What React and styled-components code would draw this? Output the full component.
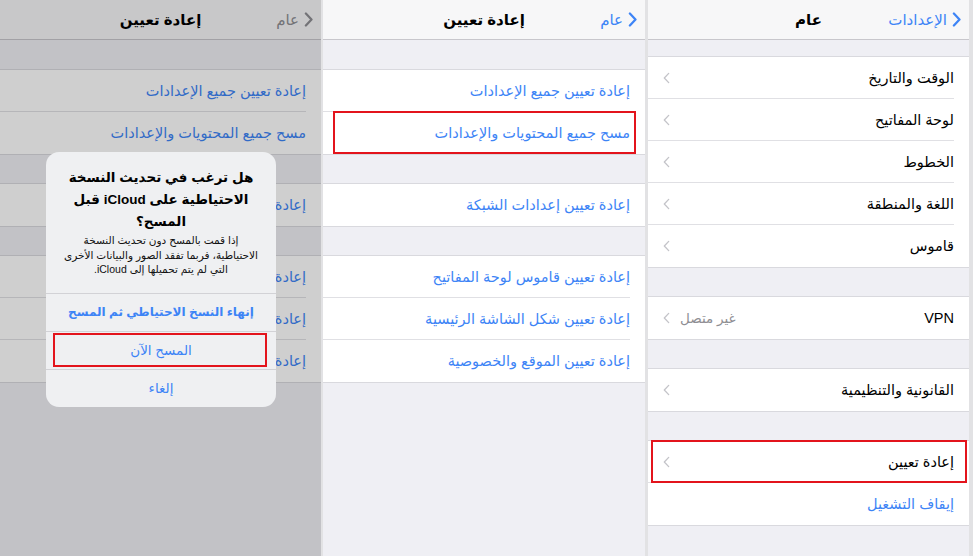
import React from 'react'
import styled, { createGlobalStyle, css } from 'styled-components'

const BLUE = '#3d84f6'
const GRAY = '#8e8e93'

const GlobalStyle = createGlobalStyle`
  html, body { margin: 0; padding: 0; background: #e2e2e4; }
  body { font-family: "Liberation Sans", "DejaVu Sans", sans-serif; }
`

const Screen = styled.div`
  display: flex;
  width: 973px;
  height: 556px;
  background: #e2e2e4;
  overflow: hidden;
`

const Phone = styled.div`
  position: relative;
  flex: 0 0 ${p => p.$w}px;
  margin-right: ${p => p.$gap || 0}px;
  height: 100%;
  background: #efeff4;
  direction: rtl;
  overflow: hidden;
`

const NavBar = styled.div`
  height: 40px;
  box-sizing: border-box;
  display: grid;
  grid-template-columns: 1fr auto 1fr;
  align-items: center;
  padding: 0 8px;
  background: #f7f7f8;
  border-bottom: 1px solid #c8c7cc;
`

const Back = styled.div`
  display: flex;
  align-items: center;
  gap: 5px;
  font-size: 15px;
  color: ${p => p.$color};
`

const Title = styled.div`
  font-size: 15px;
  font-weight: bold;
  color: #000;
`

const Group = styled.div`
  margin-top: ${p => p.$top}px;
  background: #fff;
  border-top: 1px solid #d9d9de;
  border-bottom: 1px solid #d9d9de;
`

const marked = css`
  &::after {
    content: '';
    position: absolute;
    top: ${p => p.$mark.t}px;
    bottom: ${p => p.$mark.b}px;
    left: ${p => p.$mark.l}px;
    right: ${p => p.$mark.r}px;
    border: 2px solid #e3141c;
    pointer-events: none;
  }
`

const Row = styled.div`
  position: relative;
  height: 42px;
  padding-right: 15px;
  display: flex;
  ${p => p.$mark && marked}
`

const RowBody = styled.div`
  flex: 1;
  display: flex;
  align-items: center;
  justify-content: space-between;
  padding-left: 15px;
  box-sizing: border-box;
  border-bottom: ${p => (p.$last ? 'none' : '1px solid #e0e0e4')};
`

const Label = styled.span`
  font-size: 14.5px;
  color: ${p => (p.$blue ? BLUE : '#000')};
`

const Accessory = styled.div`
  display: flex;
  align-items: center;
  gap: 10px;
  font-size: 13.5px;
  color: ${GRAY};
`

const Dim = styled.div`
  position: absolute;
  inset: 0;
  background: rgba(0, 0, 0, 0.19);
`

const Alert = styled.div`
  position: absolute;
  top: 152px;
  left: 46px;
  width: 230px;
  background: #eff0f2;
  border-radius: 13px;
  text-align: center;
`

const AlertText = styled.div`
  padding: 15px 8px 16px;
`

const AlertTitle = styled.div`
  font-size: 13.5px;
  font-weight: bold;
  line-height: 22px;
  color: #000;
`

const AlertMessage = styled.div`
  font-size: 10.5px;
  line-height: 14.5px;
  color: #111;
  white-space: nowrap;
`

const AlertButton = styled.div`
  position: relative;
  height: 37px;
  display: flex;
  align-items: center;
  justify-content: center;
  border-top: 1px solid #d2d2d6;
  font-size: ${p => (p.$bold ? 12 : 13.5)}px;
  font-weight: ${p => (p.$bold ? 'bold' : 'normal')};
  color: ${BLUE};
  ${p => p.$mark && marked}
`

const BackChevron = ({ color }) => (
  <svg width="9" height="15" viewBox="0 0 12 20">
    <path d="M2.5 2 L10 10 L2.5 18" fill="none" stroke={color} strokeWidth="3" strokeLinecap="round" strokeLinejoin="round" />
  </svg>
)

const Disclosure = () => (
  <svg width="7" height="12" viewBox="0 0 8 13">
    <path d="M6.5 1.2 L1.5 6.5 L6.5 11.8" fill="none" stroke="#c4c4c9" strokeWidth="1.5" strokeLinecap="round" strokeLinejoin="round" />
  </svg>
)

function Nav({ back, title, tint }) {
  return (
    <NavBar>
      <Back $color={tint}>
        <BackChevron color={tint} />
        <span>{back}</span>
      </Back>
      <Title>{title}</Title>
      <span />
    </NavBar>
  )
}

function Cells({ items, top, chevrons }) {
  return (
    <Group $top={top}>
      {items.map((it, i) => (
        <Row key={i} $mark={it.mark}>
          <RowBody $last={i === items.length - 1}>
            <Label $blue={it.blue}>{it.label}</Label>
            {chevrons && !it.blue && (
              <Accessory>
                {it.detail && <span>{it.detail}</span>}
                <Disclosure />
              </Accessory>
            )}
          </RowBody>
        </Row>
      ))}
    </Group>
  )
}

const resetGroups = (mark) => [
  [
    { label: 'إعادة تعيين جميع الإعدادات', blue: true },
    { label: 'مسح جميع المحتويات والإعدادات', blue: true, mark },
  ],
  [{ label: 'إعادة تعيين إعدادات الشبكة', blue: true }],
  [
    { label: 'إعادة تعيين قاموس لوحة المفاتيح', blue: true },
    { label: 'إعادة تعيين شكل الشاشة الرئيسية', blue: true },
    { label: 'إعادة تعيين الموقع والخصوصية', blue: true },
  ],
]

function ResetScreen({ tint, mark }) {
  return (
    <>
      <Nav back="عام" title="إعادة تعيين" tint={tint} />
      {resetGroups(mark).map((g, i) => (
        <Cells key={i} items={g} top={i === 0 ? 29 : 28} />
      ))}
    </>
  )
}

const generalGroups = [
  [
    { label: 'الوقت والتاريخ' },
    { label: 'لوحة المفاتيح' },
    { label: 'الخطوط' },
    { label: 'اللغة والمنطقة' },
    { label: 'قاموس' },
  ],
  [{ label: 'VPN', detail: 'غير متصل' }],
  [{ label: 'القانونية والتنظيمية' }],
  [
    { label: 'إعادة تعيين', mark: { t: -1, b: 0, l: 3, r: 2 } },
    { label: 'إيقاف التشغيل', blue: true },
  ],
]

export default function App() {
  return (
    <Screen>
      <GlobalStyle />
      <Phone $w={321} $gap={2}>
        <ResetScreen tint={GRAY} />
        <Dim />
        <Alert>
          <AlertText>
            <AlertTitle>
              هل ترغب في تحديث النسخة
              <br />
              الاحتياطية على iCloud قبل
              <br />
              المسح؟
            </AlertTitle>
            <AlertMessage>
              إذا قمت بالمسح دون تحديث النسخة
              <br />
              الاحتياطية، فربما تفقد الصور والبيانات الأخرى
              <br />
              التي لم يتم تحميلها إلى iCloud.
            </AlertMessage>
          </AlertText>
          <AlertButton $bold>إنهاء النسخ الاحتياطي ثم المسح</AlertButton>
          <AlertButton $mark={{ t: 1, b: 2, l: 7, r: 9 }}>المسح الآن</AlertButton>
          <AlertButton>إلغاء</AlertButton>
        </Alert>
      </Phone>
      <Phone $w={322} $gap={3}>
        <ResetScreen tint={BLUE} mark={{ t: -1, b: 0, l: 10, r: 9 }} />
      </Phone>
      <Phone $w={321}>
        <Nav back="الإعدادات" title="عام" tint={BLUE} />
        {generalGroups.map((g, i) => (
          <Cells key={i} items={g} top={i === 0 ? 16 : 28} chevrons />
        ))}
      </Phone>
    </Screen>
  )
}
